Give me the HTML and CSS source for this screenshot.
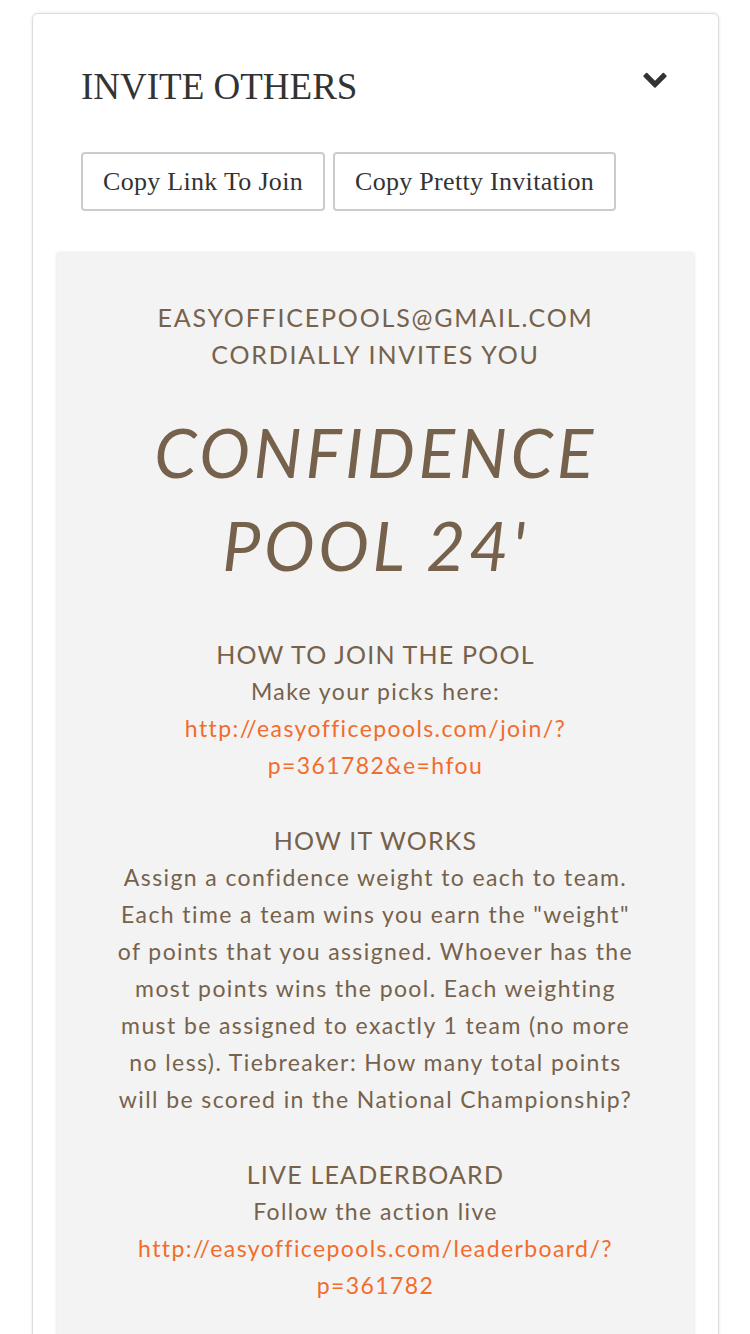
FILE: index.html
```html
<!DOCTYPE html>
<html>
<head>
    <title>Invite Others</title>
    <link rel="stylesheet" href="styles.css">
</head>
<body>
    <div class="card">
        <div class="card-head">
            <h2>INVITE OTHERS</h2>
            <svg class="chevron" viewBox="0 0 1792 1792" width="26" height="26">
                <path d="M1683 808l-742 741q-19 19-45 19t-45-19l-742-741q-19-19-19-45.5t19-45.5l166-165q19-19 45-19t45 19l531 531 531-531q19-19 45-19t45 19l166 165q19 19 19 45.5t-19 45.5z"/>
            </svg>
        </div>
        <div class="actions">
            <button>Copy Link To Join</button>
            <button>Copy Pretty Invitation</button>
        </div>
        <div class="invite">
            <p class="host">EASYOFFICEPOOLS@GMAIL.COM<br>CORDIALLY INVITES YOU</p>
            <h1 class="pool-name">CONFIDENCE POOL 24'</h1>
            <div class="section">
                <h3>HOW TO JOIN THE POOL</h3>
                <p>Make your picks here:<br>
                <a href="#">http://easyofficepools.com/join/?<wbr>p=361782&amp;e=hfou</a></p>
            </div>
            <div class="section">
                <h3>HOW IT WORKS</h3>
                <p>Assign a confidence weight to each to team. Each time a team wins you earn the "weight" of points that you assigned. Whoever has the most points wins the pool. Each weighting must be assigned to exactly 1 team (no more no less). Tiebreaker: How many total points will be scored in the National Championship?</p>
            </div>
            <div class="section">
                <h3>LIVE LEADERBOARD</h3>
                <p>Follow the action live<br>
                <a href="#">http://easyofficepools.com/leaderboard/?<wbr>p=361782</a></p>
            </div>
        </div>
    </div>
</body>
</html>
```

FILE: styles.css
```css
body {
    margin: 0;
    padding: 13px 31px 0 32px;
    background-color: #ffffff;
    font-family: "Liberation Serif", serif;
}
.card {
    border: 1px solid #dddddd;
    border-radius: 6px;
    box-shadow: 0 0 3px rgba(0, 0, 0, 0.12);
    padding: 50px 24px 0 24px;
}
.card-head {
    display: flex;
    justify-content: space-between;
    align-items: flex-start;
    padding: 0 26px 0 24px;
}
.card-head h2 {
    margin: 0;
    font-weight: normal;
    font-size: 37px;
    line-height: 46px;
    color: #333333;
}
.chevron {
    fill: #333333;
    margin-top: 1px;
}
.actions {
    display: flex;
    gap: 8px;
    padding: 0 24px;
    margin-top: 42px;
}
.actions button {
    font-family: "Liberation Serif", serif;
    font-size: 26px;
    letter-spacing: 0.3px;
    color: #333333;
    background-color: #ffffff;
    border: 2px solid #cccccc;
    border-radius: 4px;
    height: 59px;
    padding: 0 20px;
}
.invite {
    margin-top: 42px;
    background-color: #f3f3f3;
    box-shadow: 0 0 3px rgba(0, 0, 0, 0.15);
    padding: 46px 46px 60px 46px;
    text-align: center;
    color: #76624c;
    font-family: Lato, sans-serif;
    font-size: 23px;
    letter-spacing: 1.4px;
    line-height: 37px;
    min-height: 1100px;
}
.invite p {
    margin: 0;
}
.host {
    font-size: 25px;
    letter-spacing: 1.8px;
}
.pool-name {
    margin: 32px 0 45px 0;
    font-size: 68px;
    line-height: 93px;
    font-style: italic;
    font-weight: normal;
    letter-spacing: 3.6px;
}
.section {
    margin-bottom: 38px;
}
.section h3 {
    margin: 0;
    font-size: 25px;
    font-weight: normal;
    letter-spacing: 1.2px;
}
.section p {
    padding: 0 6px;
}
.section a {
    color: #f26c2c;
    text-decoration: none;
}
```
